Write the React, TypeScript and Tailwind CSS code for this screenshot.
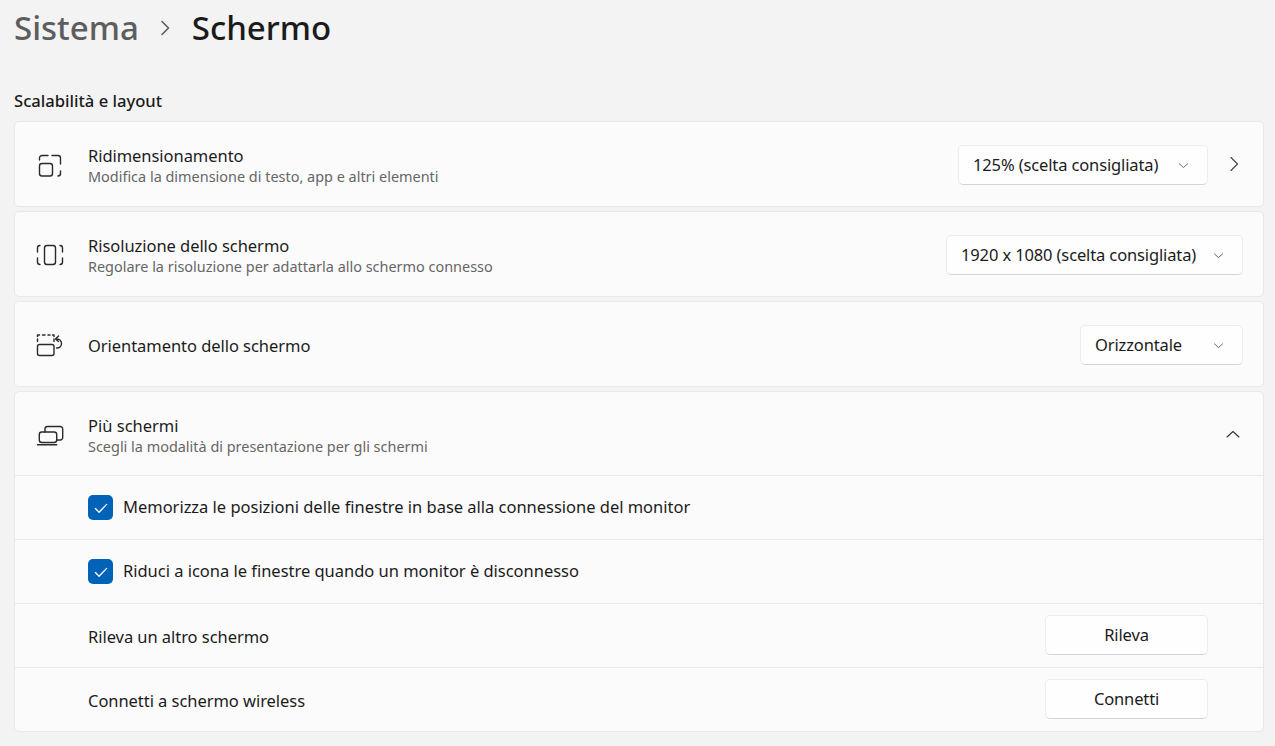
import { ReactNode } from "react";

const FONT = "font-['Noto_Sans','Open_Sans',sans-serif]";

function Chevron({ d, className, width = 1.1 }: { d: string; className?: string; width?: number }) {
  return (
    <svg viewBox="0 0 16 16" className={className} fill="none" stroke="currentColor" strokeWidth={width} strokeLinecap="round" strokeLinejoin="round">
      <path d={d} />
    </svg>
  );
}

function Select({ label, width }: { label: string; width: string }) {
  return (
    <div className={`mt-[2px] flex h-[40px] items-center justify-between rounded-[5px] border border-[#ececec] border-b-[#d4d4d4] bg-[#fefefe] pl-[14px] pr-[17px] text-[16.5px] tracking-[-0.13px] text-[#1b1b1b] ${width}`}>
      <span className="whitespace-nowrap">{label}</span>
      <Chevron d="M3 6l5 4.500L13 6" className="h-[13px] w-[13px] text-[#555]" />
    </div>
  );
}

function ActionButton({ label }: { label: string }) {
  return (
    <div className="mb-[2px] flex h-[40px] w-[163px] items-center justify-center rounded-[5px] border border-[#ececec] border-b-[#d4d4d4] bg-[#fefefe] pt-[2px] text-[16.5px] tracking-[-0.13px] text-[#1b1b1b]">
      {label}
    </div>
  );
}

function IconBox({ children }: { children: ReactNode }) {
  return (
    <svg viewBox="0 0 30 30" className="h-[30px] w-[30px] shrink-0 text-[#2a2a2a]" fill="none" stroke="currentColor" strokeWidth={1.4} strokeLinecap="round" strokeLinejoin="round">
      {children}
    </svg>
  );
}

function Card({ icon, title, subtitle, right }: { icon: ReactNode; title: string; subtitle?: string; right: ReactNode }) {
  return (
    <div className="flex h-[86px] items-center justify-between rounded-[5px] border border-[#e8e8e8] bg-[#fbfbfb] pl-[20px] pr-[20px]">
      <div className="flex items-center gap-[23px]">
        <IconBox>{icon}</IconBox>
        <div className={subtitle ? "flex flex-col pt-[3px]" : "flex flex-col pt-[2px]"}>
          <span className="text-[16.5px] leading-[21px] tracking-[-0.05px] text-[#1b1b1b]">{title}</span>
          {subtitle && <span className="mt-[1px] text-[14.45px] leading-[19px] text-[#666]">{subtitle}</span>}
        </div>
      </div>
      {right}
    </div>
  );
}

function CheckRow({ label }: { label: string }) {
  return (
    <div className="flex h-[64px] items-center gap-[10px] border-t border-[#e8e8e8] pl-[73px]">
      <div className="flex h-[25px] w-[25px] items-center justify-center rounded-[5px] bg-[#0063b8]">
        <svg viewBox="0 0 16 16" className="h-[18px] w-[18px] text-white" fill="none" stroke="currentColor" strokeWidth={1.2} strokeLinecap="round" strokeLinejoin="round">
          <path d="M3 8.500l3.300 3.200L13 4.800" />
        </svg>
      </div>
      <span className="text-[16.5px] tracking-[-0.02px] text-[#1b1b1b]">{label}</span>
    </div>
  );
}

function ButtonRow({ label, action }: { label: string; action: string }) {
  return (
    <div className="flex h-[64px] items-center justify-between border-t border-[#e8e8e8] pl-[73px] pr-[55px]">
      <span className="pt-[4px] text-[16.5px] tracking-[-0.05px] text-[#1b1b1b]">{label}</span>
      <ActionButton label={action} />
    </div>
  );
}

export default function App() {
  return (
    <div className={`h-[746px] w-[1275px] overflow-hidden bg-[#f3f3f3] pl-[14px] pr-[11px] ${FONT}`}>
      <div className="flex h-[55px] items-center text-[33px] font-medium">
        <span className="text-[#5d5d5d]">Sistema</span>
        <Chevron d="M5 1.500l6.500 6.500L5 14.500" width={1.6} className="ml-[18px] mr-[19px] h-[16px] w-[16px] text-[#5d5d5d]" />
        <span className="text-[#1b1b1b]">Schermo</span>
      </div>
      <div className="mt-[33px] h-[33px] text-[16.6px] font-medium leading-[26px] text-[#1b1b1b]">Scalabilità e layout</div>
      <div className="flex flex-col gap-[4px]">
        <Card
          title="Ridimensionamento"
          subtitle="Modifica la dimensione di testo, app e altri elementi"
          icon={
            <>
              <rect x="4.500" y="14.500" width="13" height="12.500" rx="2.500" />
              <path d="M4.500 11V9A2.500 2.500 0 0 1 7 6.500h6M17 6.500h6A2.500 2.500 0 0 1 25.500 9v6M25.500 22v2.500A2.500 2.500 0 0 1 23 27" />
            </>
          }
          right={
            <div className="flex items-center gap-[18px]">
              <Select label="125% (scelta consigliata)" width="w-[250px]" />
              <Chevron d="M5 1.500l6.500 6.500L5 14.500" className="mr-[1px] h-[16px] w-[16px] text-[#444]" />
            </div>
          }
        />
        <Card
          title="Risoluzione dello schermo"
          subtitle="Regolare la risoluzione per adattarla allo schermo connesso"
          icon={
            <>
              <rect x="9.500" y="6.500" width="11" height="19" rx="2.500" />
              <path d="M5 6.500A2.500 2.500 0 0 0 2.500 9v4M2.500 19v4A2.500 2.500 0 0 0 5 25.500M25 6.500A2.500 2.500 0 0 1 27.500 9v4M27.500 19v4A2.500 2.500 0 0 1 25 25.500" />
            </>
          }
          right={<Select label="1920 x 1080 (scelta consigliata)" width="w-[297px]" />}
        />
        <Card
          title="Orientamento dello schermo"
          icon={
            <>
              <rect x="2.500" y="15.500" width="16.500" height="11" rx="2" />
              <path d="M2.500 12.500V10M2.500 7.500V6H4.500M7.500 6H10M13 6H15M17.500 6H19V7.500M19 10V12.500" />
              <path d="M21 10H22a4.500 4.500 0 0 1 0 9h-.5M23.500 7l-3 3 3 2.500" />
            </>
          }
          right={<Select label="Orizzontale" width="w-[163px]" />}
        />
        <div className="overflow-hidden rounded-[5px] border border-[#e8e8e8] bg-[#fbfbfb]">
          <div className="flex h-[83px] items-center justify-between pl-[20px] pr-[22px]">
            <div className="flex items-center gap-[23px]">
              <IconBox>
                <path d="M10 13V10A2.500 2.500 0 0 1 12.500 7.500H25.200A2.500 2.500 0 0 1 27.700 10V18.500A2.500 2.500 0 0 1 25.200 21H21.700" />
                <rect x="4.300" y="13" width="17.400" height="10.500" rx="2.500" />
                <path d="M2.500 25.800H21.700" />
              </IconBox>
              <div className="flex flex-col pt-[3px]">
                <span className="text-[16.5px] leading-[21px] text-[#1b1b1b]">Più schermi</span>
                <span className="mt-[1px] text-[14.45px] leading-[19px] text-[#666]">Scegli la modalità di presentazione per gli schermi</span>
              </div>
            </div>
            <Chevron d="M2 11l6-5.500 6 5.500" className="h-[16px] w-[16px] text-[#333]" />
          </div>
          <CheckRow label="Memorizza le posizioni delle finestre in base alla connessione del monitor" />
          <CheckRow label="Riduci a icona le finestre quando un monitor è disconnesso" />
          <ButtonRow label="Rileva un altro schermo" action="Rileva" />
          <ButtonRow label="Connetti a schermo wireless" action="Connetti" />
        </div>
      </div>
    </div>
  );
}
